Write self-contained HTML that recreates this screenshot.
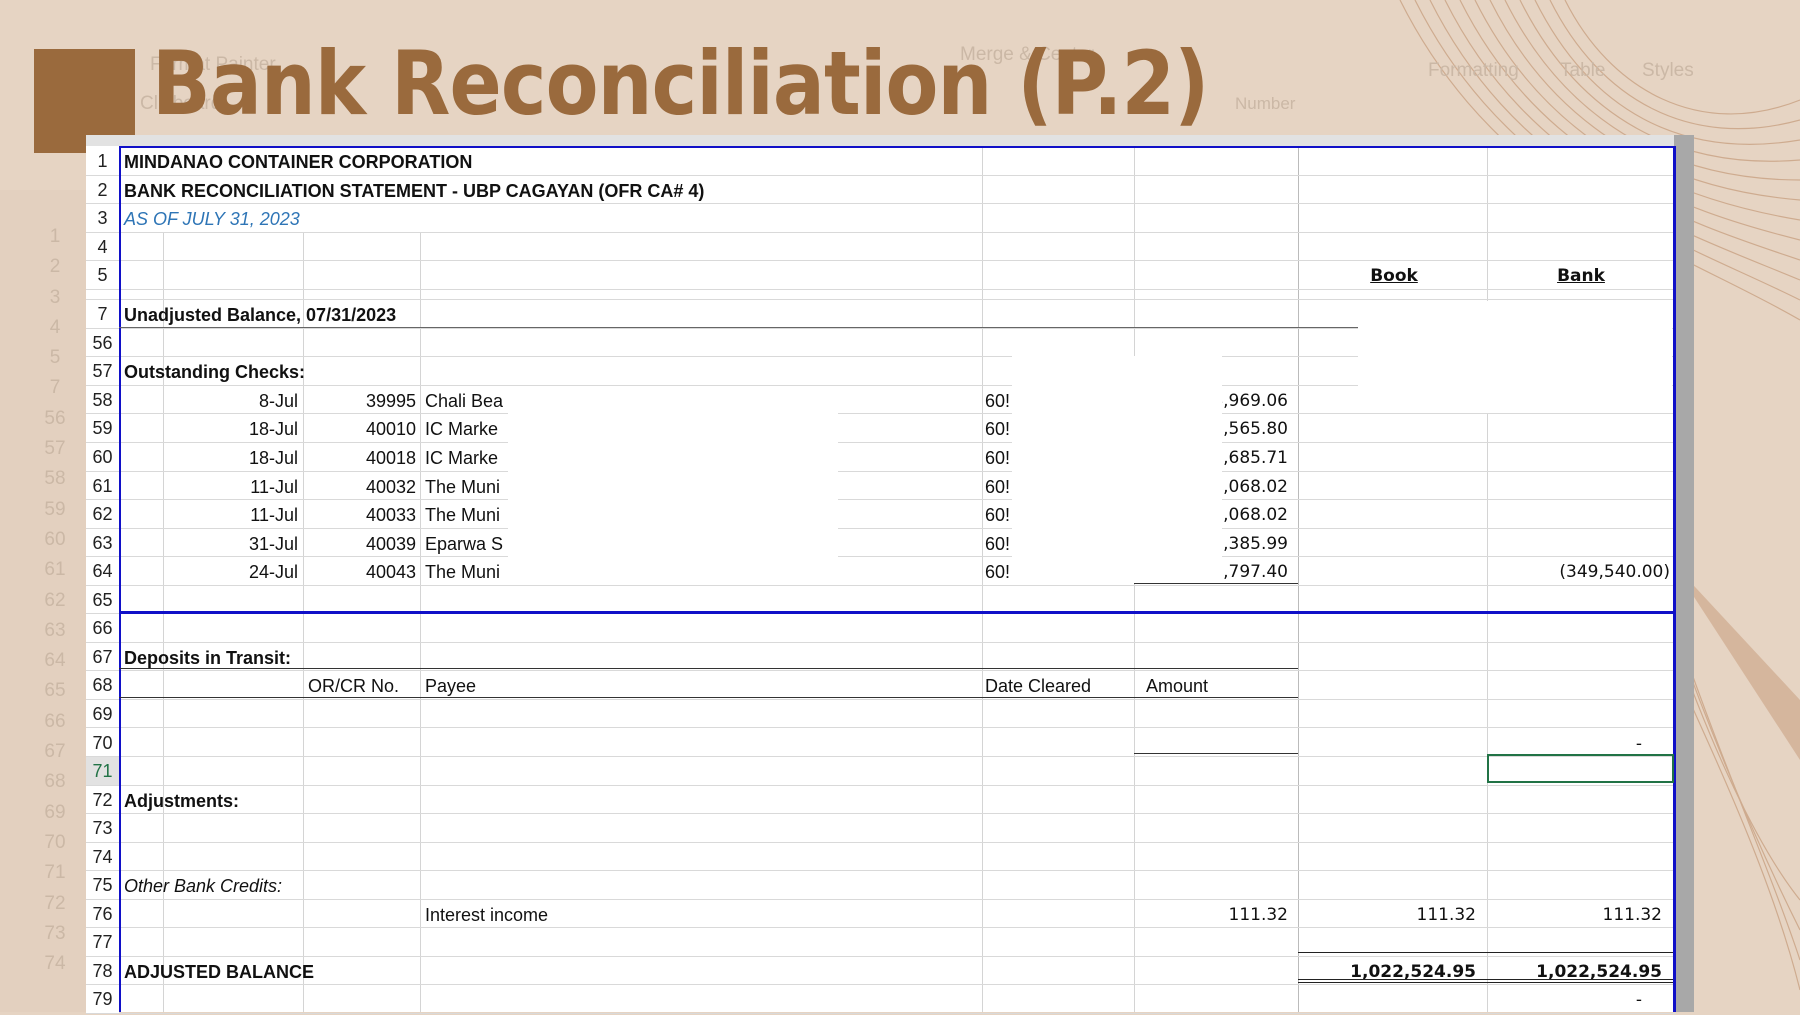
<!DOCTYPE html>
<html><head><meta charset="utf-8"><style>
*{margin:0;padding:0;box-sizing:border-box}
body{width:1800px;height:1012px;overflow:hidden;background:#e6d4c3;position:relative;font-family:"Liberation Sans",sans-serif}
.a{position:absolute}
.faint{color:#cbb8a6;font-size:19px;position:absolute}
.sheet{position:absolute;left:86px;top:135px;width:1590px;height:877px;background:#fff}
.r{position:absolute;left:0;width:1590px;height:28.55px;border-bottom:1px solid #d9d9d9}
.n{position:absolute;left:0;width:33px;text-align:center;font-size:18px;line-height:28px;color:#222;background:#fff}
.t{position:absolute;font-size:18px;line-height:30px;color:#111;white-space:nowrap}
.b{font-weight:bold}
.num{font-family:"DejaVu Sans",sans-serif;font-size:17px}
.v{position:absolute;top:11px;width:1px;height:866px;background:#d4d4d4}
</style></head><body>
<svg class="a" style="left:1380px;top:0" width="420" height="1012" viewBox="0 0 420 1012">
<g fill="none" stroke="#c9a283" stroke-width="1.2" opacity="0.8">
<path d="M20 0 C120 200 300 250 420 320"/><path d="M35 0 C130 190 300 240 420 300"/><path d="M50 0 C140 180 300 230 420 280"/><path d="M65 0 C150 170 300 220 420 260"/><path d="M80 0 C160 160 300 210 420 240"/><path d="M95 0 C170 150 300 200 420 220"/><path d="M110 0 C180 140 300 190 420 200"/><path d="M125 0 C190 130 300 180 420 180"/><path d="M140 0 C200 120 300 170 420 160"/><path d="M155 0 C210 110 300 160 420 140"/><path d="M170 0 C220 100 310 150 420 120"/><path d="M185 0 C230 90 320 140 420 100"/>
<path d="M280 600 C330 750 380 850 420 900"/><path d="M290 620 C340 760 385 860 420 930"/><path d="M300 640 C345 770 390 870 420 960"/><path d="M300 680 C350 790 395 890 420 990"/>
</g>
<path d="M290 560 L420 760 L420 700 Z" fill="#c9a283" opacity="0.6"/>
</svg>
<div class="faint" style="left:150px;top:54px">Format Painter</div>
<div class="faint" style="left:960px;top:44px">Merge &amp; Center</div>
<div class="faint" style="left:1235px;top:94px;font-size:17px">Number</div>
<div class="faint" style="left:1428px;top:60px">Formatting</div>
<div class="faint" style="left:1560px;top:60px">Table</div>
<div class="faint" style="left:1642px;top:60px">Styles</div>
<div class="faint" style="left:140px;top:93px">Clipboard</div>
<div class="a" style="left:0;top:190px;width:86px;height:822px;background:#e3d0bf"></div>
<div class="faint" style="left:44px;top:222px;line-height:30.3px;text-align:center;width:22px">1<br>2<br>3<br>4<br>5<br>7<br>56<br>57<br>58<br>59<br>60<br>61<br>62<br>63<br>64<br>65<br>66<br>67<br>68<br>69<br>70<br>71<br>72<br>73<br>74</div>
<div class="a" style="left:34px;top:49px;width:101px;height:104px;background:#9a6a3d"></div>
<div class="a" style="left:152px;top:32px;font-family:'DejaVu Sans',sans-serif;font-weight:bold;font-size:88px;color:#9a6a3d;letter-spacing:-1px;white-space:nowrap;transform:scaleX(0.875);transform-origin:0 0">Bank Reconciliation (P.2)</div>
<div class="a" style="left:86px;top:135px;width:1590px;height:12px;background:#e0e0e0"></div>
<div class="sheet">
 <div class="a" style="left:0;top:0;width:1590px;height:11px;background:#e2e2e2"></div>
 <div class="a" style="left:1588px;top:0;width:20px;height:877px;background:#a8a8a8"></div>
 <div class="v" style="left:77px"></div><div class="v" style="left:217px"></div><div class="v" style="left:334px"></div><div class="v" style="left:896px"></div><div class="v" style="left:1048px"></div><div class="v" style="left:1212px;background:#bbb"></div><div class="v" style="left:1401px"></div>
 <div class="a" style="left:34px;top:12px;width:861px;height:85px;background:#fff"></div>
 <div class="a" style="left:33px;top:11px;width:1px;height:866px;background:#bbb"></div>
 <div id="rows"></div>
</div>
<div class="a" style="left:1673px;top:146px;width:3px;height:866px;background:#1010c8"></div>
<div class="a" style="left:119px;top:146px;width:1556px;height:2px;background:#1010c8"></div>
<div class="a" style="left:119px;top:146px;width:2px;height:866px;background:#1010c8"></div>
<script>
var R=[["1",[["MINDANAO CONTAINER CORPORATION",38,"b"]]],["2",[["BANK RECONCILIATION STATEMENT - UBP CAGAYAN (OFR CA# 4)",38,"b"]]],["3",[["AS OF JULY 31, 2023",38,"i"]]],["4",[]],["5",[["Book",1308,"bu",1308,"c"],["Bank",1495,"bu",1495,"c"]]],["6",[],10.5],["7",[["Unadjusted Balance, 07/31/2023",38,"b"]]],["56",[]],["57",[["Outstanding Checks:",38,"b"]]]];
var chk=[["8-Jul","39995","Chali Bea","4,969.06"],["18-Jul","40010","IC Marke","1,565.80"],["18-Jul","40018","IC Marke","2,685.71"],["11-Jul","40032","The Muni","2,068.02"],["11-Jul","40033","The Muni","2,068.02"],["31-Jul","40039","Eparwa S","3,385.99"],["24-Jul","40043","The Muni","2,797.40"]];
chk.forEach(function(c,i){var cells=[[c[0],0,"r",212],[c[1],0,"r",330],[c[2],339,""],["60!",899,""],[c[3],0,"rn",1202]];if(i==6)cells.push(["(349,540.00)",0,"rn",1584]);R.push([String(58+i),cells]);});
R=R.concat([["65",[]],["66",[]],["67",[["Deposits in Transit:",38,"b"]]],["68",[["OR/CR No.",222,""],["Payee",339,""],["Date Cleared",899,""],["Amount",1060,""]]],["69",[]],["70",[["-",0,"rn",1556]]],["71",[]],["72",[["Adjustments:",38,"b"]]],["73",[]],["74",[]],["75",[["Other Bank Credits:",38,"i2"]]],["76",[["Interest income",339,""],["111.32",0,"rn",1202],["111.32",0,"rn",1390],["111.32",0,"rn",1576]]],["77",[]],["78",[["ADJUSTED BALANCE",38,"b"],["1,022,524.95",0,"rnb",1390],["1,022,524.95",0,"rnb",1576]]],["79",[["-",0,"rn",1556]]]]);
var h="",yy=12;
R.forEach(function(r){var ht=r[2]||28.55;h+='<div class="r" style="top:'+yy+'px;height:'+ht+'px"><div class="n" style="height:'+(ht-1)+'px;'+(r[0]=="71"?'color:#217346;background:#e2e2e2':'')+'">'+(r[0]=="6"?'':r[0])+'</div>';
r[1].forEach(function(c){var s="",cl="t";var f=c[2];
if(f.indexOf("b")>=0)cl+=" b";if(f.indexOf("n")>=0)cl+=" num";
if(f=="i")s+="font-style:italic;color:#2e75b6;";if(f=="i2")s+="font-style:italic;";
if(f=="bu")s+="text-decoration:underline;font-family:'DejaVu Sans',sans-serif;font-size:17px;";
if(f.indexOf("r")==0){s+="right:"+(1590-c[3])+"px;";}else if(f=="bu"){s+="left:"+(c[3]-60)+"px;width:120px;text-align:center;";}else s+="left:"+c[1]+"px;";
h+='<div class="'+cl+'" style="'+s+'">'+c[0]+'</div>';});
h+='</div>';yy+=ht;});
document.getElementById("rows").innerHTML=h;
</script>
<div class="a" style="left:508px;top:386px;width:330px;height:198px;background:#fff"></div>
<div class="a" style="left:1012px;top:356px;width:210px;height:228px;background:#fff"></div>
<div class="a" style="left:1358px;top:301px;width:314px;height:112px;background:#fff"></div>
<div class="a" style="left:119px;top:327px;width:1239px;height:1px;background:#666"></div>
<div class="a" style="left:1134px;top:583px;width:164px;height:1px;background:#333"></div>
<div class="a" style="left:119px;top:611px;width:1556px;height:3px;background:#1010c8"></div>
<div class="a" style="left:119px;top:668px;width:1179px;height:1px;background:#333"></div>
<div class="a" style="left:119px;top:697px;width:1179px;height:1px;background:#333"></div>
<div class="a" style="left:1134px;top:753px;width:164px;height:1px;background:#333"></div>
<div class="a" style="left:1487px;top:754px;width:187px;height:29px;border:2px solid #217346"></div>
<div class="a" style="left:1298px;top:952px;width:375px;height:1px;background:#222"></div>
<div class="a" style="left:1298px;top:979px;width:375px;height:4px;border-top:1px solid #222;border-bottom:1px solid #222"></div>
</body></html>
